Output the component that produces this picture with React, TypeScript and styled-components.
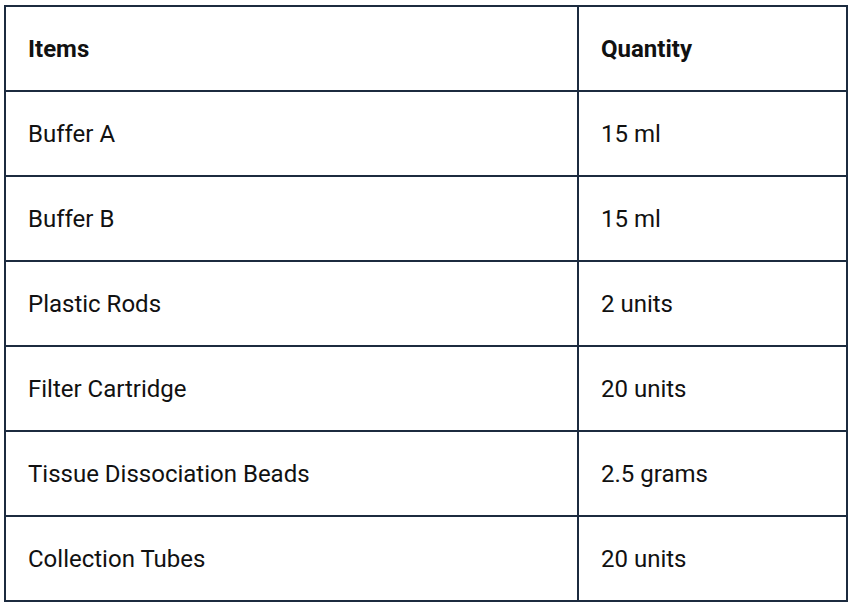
import React from "react";
import styled, { createGlobalStyle } from "styled-components";

const Global = createGlobalStyle`
  html, body { margin: 0; padding: 0; background: #ffffff; }
  body { font-family: Roboto, "Noto Sans", Arial, sans-serif; }
`;

const Wrap = styled.div`
  padding: 5px 0 0 4px;
`;

const Table = styled.table`
  width: 844px;
  border-collapse: collapse;
  border: 2px solid #1c2b3f;
`;

const Cell = styled.td<{ $head?: boolean; $wide?: boolean }>`
  border: 2px solid #1c2b3f;
  height: 85px;
  padding: 0 0 0 22px;
  box-sizing: border-box;
  width: ${(p) => (p.$wide ? "573px" : "auto")};
  font-family: Roboto, "Noto Sans", Arial, sans-serif;
  font-size: 24px;
  line-height: 28px;
  color: #111111;
  font-weight: ${(p) => (p.$head ? 700 : 400)};
  text-align: left;
  vertical-align: middle;
`;

const rows: [string, string][] = [
  ["Buffer A", "15 ml"],
  ["Buffer B", "15 ml"],
  ["Plastic Rods", "2 units"],
  ["Filter Cartridge", "20 units"],
  ["Tissue Dissociation Beads", "2.5 grams"],
  ["Collection Tubes", "20 units"],
];

export default function App() {
  return (
    <>
      <Global />
      <Wrap>
        <Table>
          <thead>
            <tr>
              <Cell as="th" $head $wide>Items</Cell>
              <Cell as="th" $head>Quantity</Cell>
            </tr>
          </thead>
          <tbody>
            {rows.map(([a, b]) => (
              <tr key={a}>
                <Cell $wide>{a}</Cell>
                <Cell>{b}</Cell>
              </tr>
            ))}
          </tbody>
        </Table>
      </Wrap>
    </>
  );
}
